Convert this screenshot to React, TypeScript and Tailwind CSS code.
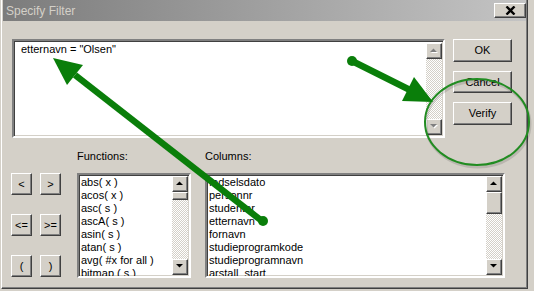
import React from "react";

const raised =
  "border border-t-white border-l-white border-r-[#404040] border-b-[#404040] shadow-[inset_-1px_-1px_0_#808080] bg-[#d4d0c8]";
const sunken =
  "border-2 border-t-[#808080] border-l-[#808080] border-r-white border-b-white";
const sunkenInner =
  "shadow-[inset_1px_1px_0_#404040,inset_-1px_-1px_0_#d4d0c8]";
const track =
  "bg-[repeating-conic-gradient(#d4d0c8_0%_25%,#ffffff_0%_50%)] bg-[length:2px_2px]";

function Arrow({ dir, disabled }: { dir: "up" | "down"; disabled?: boolean }) {
  const pts = dir === "up" ? "0,4 7,4 3.5,0.5" : "0,0 7,0 3.5,3.5";
  return (
    <svg width="9" height="6" viewBox="0 0 9 6">
      {disabled && (
        <polygon points={pts} fill="#ffffff" transform="translate(1,1)" />
      )}
      <polygon points={pts} fill={disabled ? "#808080" : "#000000"} />
    </svg>
  );
}

function ScrollBtn({ dir, disabled }: { dir: "up" | "down"; disabled?: boolean }) {
  return (
    <div className={`${raised} w-[16px] h-[16px] flex items-center justify-center shrink-0`}>
      <Arrow dir={dir} disabled={disabled} />
    </div>
  );
}

function Btn({ label, cls }: { label: string; cls: string }) {
  return (
    <div className={`${raised} ${cls} flex items-center justify-center text-[11px] leading-none text-black`}>
      {label}
    </div>
  );
}

function ListBox({
  items,
  width,
  thumb,
}: {
  items: string[];
  width: string;
  thumb: string;
}) {
  return (
    <div className={`${sunken} ${width} h-[105px] bg-white`}>
      <div className={`${sunkenInner} w-full h-full flex`}>
        <div className="flex-1 overflow-hidden pl-[2px] pt-[1px]">
          {items.map((t) => (
            <div key={t} className="h-[13px] leading-[13px] text-[11px] whitespace-nowrap">
              {t}
            </div>
          ))}
        </div>
        <div className="w-[16px] flex flex-col pt-[1px] pb-[1px] mr-[1px]">
          <ScrollBtn dir="up" />
          <div className={`${raised} ${thumb} w-[16px] shrink-0`} />
          <div className={`${track} flex-1`} />
          <ScrollBtn dir="down" />
        </div>
      </div>
    </div>
  );
}

export default function App() {
  return (
    <div className="relative w-[534px] h-[291px] overflow-hidden bg-[#d4d0c8] pl-[1px] font-['Liberation_Sans',Arial,sans-serif] text-black">
      <div className="w-[527px] h-[289px] border-l border-l-white border-r border-r-[#404040] border-b border-b-[#404040] shadow-[inset_-1px_-1px_0_#808080] pl-[1px] pr-[1px] flex flex-col">
        {/* Title bar */}
        <div className="h-[21px] flex items-center bg-[linear-gradient(to_right,#7c7c7c,#c4c4c4)] pl-[3px] pr-0">
          <span className="text-[12px] text-[#d4d0c8] leading-none">Specify Filter</span>
          <div className="flex-1" />
          <div className={`${raised} w-[32px] h-[15px] flex items-center justify-center`}>
            <svg width="11" height="9" viewBox="0 0 11 9">
              <path d="M1.5 0.5 L9.5 8.5 M9.5 0.5 L1.5 8.5" stroke="#000" strokeWidth="2.4" />
            </svg>
          </div>
        </div>

        {/* Body */}
        <div className="flex flex-col pl-[9px]">
          <div className="flex mt-[18px]">
            <div className={`${sunken} w-[433px] h-[99px] bg-white`}>
              <div className={`${sunkenInner} w-full h-full flex`}>
                <div className="flex-1 pl-[7px] pt-[2px] text-[11px] leading-[13px]">
                  etternavn = "Olsen"
                </div>
                <div className="w-[16px] flex flex-col pt-[2px] pb-[1px] mr-[1px]">
                  <ScrollBtn dir="up" disabled />
                  <div className={`${track} flex-1`} />
                  <ScrollBtn dir="down" disabled />
                </div>
              </div>
            </div>
            <div className="ml-[8px] flex flex-col gap-[9px]">
              <Btn label="OK" cls="w-[59px] h-[23px]" />
              <Btn label="Cancel" cls="w-[59px] h-[22px]" />
              <Btn label="Verify" cls="w-[59px] h-[23px]" />
            </div>
          </div>

          <div className="flex items-start mt-[12px]">
            <div className="-ml-px mt-[23px] grid grid-cols-[21px_21px] gap-x-[8px] gap-y-[19px]">
              <Btn label="<" cls="w-[21px] h-[22px]" />
              <Btn label=">" cls="w-[21px] h-[22px]" />
              <Btn label="<=" cls="w-[21px] h-[22px]" />
              <Btn label=">=" cls="w-[21px] h-[22px]" />
              <Btn label="(" cls="w-[21px] h-[22px]" />
              <Btn label=")" cls="w-[21px] h-[22px]" />
            </div>
            <div className="ml-[16px] flex flex-col">
              <div className="h-[13px] leading-[13px] text-[11px] mb-[10px]">Functions:</div>
              <ListBox
                width="w-[114px]"
                thumb="h-[8px]"
                items={[
                  "abs( x )",
                  "acos( x )",
                  "asc( s )",
                  "ascA( s )",
                  "asin( s )",
                  "atan( s )",
                  "avg( #x for all )",
                  "bitmap ( s )",
                ]}
              />
            </div>
            <div className="ml-[14px] flex flex-col">
              <div className="h-[13px] leading-[13px] text-[11px] mb-[10px]">Columns:</div>
              <ListBox
                width="w-[300px]"
                thumb="h-[22px]"
                items={[
                  "fodselsdato",
                  "personnr",
                  "studentnr",
                  "etternavn",
                  "fornavn",
                  "studieprogramkode",
                  "studieprogramnavn",
                  "arstall_start",
                ]}
              />
            </div>
          </div>
        </div>
      </div>

      {/* Annotation overlay */}
      <svg
        className="absolute inset-0 pointer-events-none"
        width="534"
        height="291"
        viewBox="0 0 534 291"
      >
        <ellipse cx="478" cy="124" rx="52" ry="43" fill="none" stroke="rgba(0,0,0,0.12)" strokeWidth="3" />
        <ellipse cx="477" cy="122" rx="52" ry="43" fill="none" stroke="#218c21" strokeWidth="2" />
        <line x1="262" y1="221" x2="75" y2="75" stroke="#0a7e0a" strokeWidth="6.5" />
        <circle cx="263" cy="221" r="5" fill="#0a7e0a" />
        <polygon points="53,58 83,65 67,85" fill="#0a7e0a" />
        <line x1="352" y1="61" x2="410" y2="90" stroke="#0a7e0a" strokeWidth="6.5" />
        <circle cx="352" cy="61" r="5" fill="#0a7e0a" />
        <polygon points="433,102 402,101 414,77" fill="#0a7e0a" />
      </svg>
    </div>
  );
}
